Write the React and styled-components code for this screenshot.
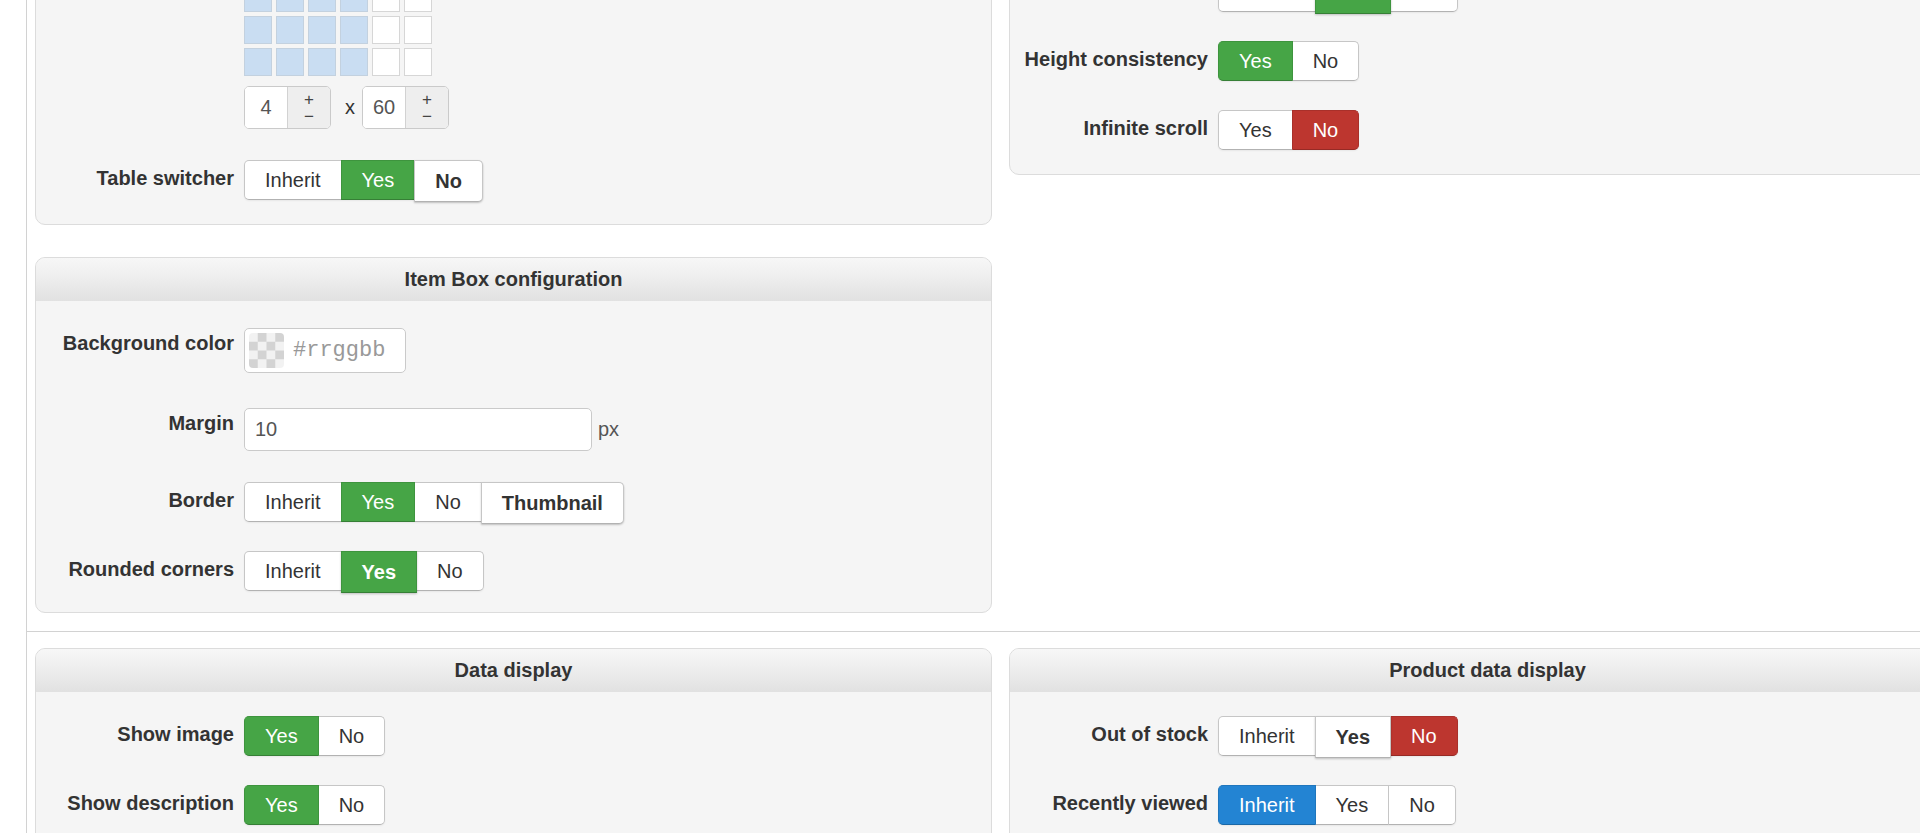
import React from 'react'
import styled, { createGlobalStyle } from 'styled-components'

const GlobalStyle = createGlobalStyle`
  html, body {
    margin: 0;
    padding: 0;
    overflow: hidden;
    background: #fff;
  }
  body {
    font-family: "Liberation Sans", Arial, sans-serif;
    font-size: 20px;
    color: #333;
  }
`

const tones = {
  default: { bg: '#fff', border: '#c6c6c6', bottom: '#b2b2b2', color: '#333' },
  success: { bg: '#46a546', border: '#3e943e', bottom: '#367f36', color: '#fff' },
  danger: { bg: '#bd362f', border: '#a9302a', bottom: '#962a25', color: '#fff' },
  primary: { bg: '#2384d3', border: '#1f76bd', bottom: '#1b68a6', color: '#fff' },
}

// scrolled view: the top of the first row of panels sits above the window
const Page = styled.div`
  margin-top: -165px;
  margin-left: 26px;
  border-left: 1px solid #d2d2d2;
  min-height: 1200px;
`

const Section = styled.div`
  display: grid;
  grid-template-columns: 957px 957px;
  column-gap: 17px;
  align-items: start;
  padding: 0 0 18px 8px;

  & + & {
    border-top: 1px solid #d2d2d2;
    padding-top: 16px;
  }
`

const Column = styled.div`
  display: flex;
  flex-direction: column;
  gap: 32px;
`

const Card = styled.div`
  background: #f5f5f5;
  border: 1px solid #dcdcdc;
  border-radius: 10px;
  overflow: hidden;
`

const CardHeader = styled.div`
  height: 43px;
  line-height: 43px;
  text-align: center;
  font-weight: bold;
  color: #333;
  background: linear-gradient(to bottom, #f7f7f7 0%, #efefef 40%, #e1e1e1 100%);
`

const CardBody = styled.div`
  display: flex;
  flex-direction: column;
  padding: 24px 0 ${p => p.$bottom ?? 24}px;
`

const Row = styled.div`
  display: grid;
  grid-template-columns: 198px auto;
  column-gap: 10px;
  justify-content: start;
  align-items: start;
  margin-bottom: ${p => p.$gap ?? 29}px;

  &:last-child {
    margin-bottom: 0;
  }
`

const Label = styled.label`
  text-align: right;
  font-weight: bold;
  line-height: 24px;
  padding-top: ${p => p.$pad ?? 6}px;
  white-space: nowrap;
`

const Controls = styled.div`
  display: flex;
  flex-direction: ${p => (p.$stack ? 'column' : 'row')};
  align-items: ${p => (p.$stack ? 'flex-start' : 'center')};
`

const BtnGroup = styled.div`
  display: inline-flex;
  align-items: flex-start;
  height: 40px;
  border-radius: 5px;
  box-shadow: 0 1px 2px rgba(0, 0, 0, 0.06);
`

// the pressed-looking option hangs 2px below the group without moving the row
const Btn = styled.span`
  position: relative;
  z-index: ${p => (p.$focus ? 2 : p.$tone && p.$tone !== 'default' ? 1 : 0)};
  box-sizing: border-box;
  height: ${p => (p.$focus ? 42 : 40)}px;
  line-height: ${p => (p.$focus ? 40 : 38)}px;
  padding: 0 20px;
  margin-left: -1px;
  font-size: 20px;
  font-weight: ${p => (p.$focus ? 'bold' : 'normal')};
  white-space: nowrap;
  color: ${p => tones[p.$tone || 'default'].color};
  background: ${p => tones[p.$tone || 'default'].bg};
  border: 1px solid ${p => tones[p.$tone || 'default'].border};
  border-bottom-color: ${p => tones[p.$tone || 'default'].bottom};
  box-shadow: ${p => (p.$focus ? '0 1px 2px rgba(0, 0, 0, 0.22)' : 'none')};

  &:first-child {
    margin-left: 0;
    border-radius: 5px 0 0 5px;
  }
  &:last-child {
    border-radius: 0 5px 5px 0;
  }
`

const Picker = styled.div`
  display: grid;
  grid-template-columns: repeat(6, 28px);
  grid-auto-rows: 28px;
  gap: 4px;
  margin-top: 17px;
`

const Cell = styled.span`
  box-sizing: border-box;
  border: 1px solid ${p => (p.$on ? '#c3d1df' : '#d6d6d6')};
  background: ${p => (p.$on ? '#c9ddf2' : '#fff')};
`

const SpinRow = styled.div`
  display: flex;
  align-items: center;
  margin-top: 10px;
`

const Spinner = styled.div`
  display: inline-flex;
  box-sizing: border-box;
  height: 43px;
  border: 1px solid #cacaca;
  border-radius: 5px;
  overflow: hidden;
  background: #fff;
`

const SpinInput = styled.input`
  box-sizing: border-box;
  width: 42px;
  height: 100%;
  border: 0;
  padding: 0;
  text-align: center;
  font: 20px "Liberation Sans", Arial, sans-serif;
  color: #555;
  background: #fff;
  outline: none;
`

const SpinButtons = styled.div`
  width: 42px;
  display: flex;
  flex-direction: column;
  align-items: center;
  justify-content: center;
  background: #eee;
  border-left: 1px solid #d2d2d2;
  color: #444;
  font-size: 17px;
  line-height: 17px;
`

const Times = styled.span`
  margin: 0 7px 0 14px;
  color: #333;
`

const ColorField = styled.div`
  box-sizing: border-box;
  display: flex;
  align-items: center;
  gap: 9px;
  width: 162px;
  height: 45px;
  margin-top: 3px;
  padding-left: 4px;
  border: 1px solid #cacaca;
  border-radius: 5px;
  background: #fff;
`

const Swatch = styled.span`
  flex: none;
  width: 35px;
  height: 35px;
  border-radius: 4px;
  background: repeating-conic-gradient(#d3d3d3 0 25%, #f2f2f2 0 50%) 0 0 / 17.5px 17.5px;
`

const ColorInput = styled.input`
  width: 100px;
  border: 0;
  padding: 0;
  background: transparent;
  font: 22px "Liberation Mono", "DejaVu Sans Mono", monospace;
  color: #555;
  outline: none;

  &::placeholder {
    color: #999;
  }
`

const TextInput = styled.input`
  box-sizing: border-box;
  width: 348px;
  height: 43px;
  padding: 0 10px;
  border: 1px solid #cacaca;
  border-radius: 5px;
  background: #fff;
  font: 20px "Liberation Sans", Arial, sans-serif;
  color: #555;
  outline: none;
`

const Unit = styled.span`
  margin-left: 6px;
  color: #555;
`

const Toggle = ({ options }) => (
  <BtnGroup>
    {options.map(o => (
      <Btn key={o.label} $tone={o.tone} $focus={o.focus}>
        {o.label}
      </Btn>
    ))}
  </BtnGroup>
)

const Field = ({ label, children, pad, gap, stack }) => (
  <Row $gap={gap}>
    <Label $pad={pad}>{label}</Label>
    <Controls $stack={stack}>{children}</Controls>
  </Row>
)

const Spin = ({ value }) => (
  <Spinner>
    <SpinInput defaultValue={value} />
    <SpinButtons>
      <span>+</span>
      <span>−</span>
    </SpinButtons>
  </Spinner>
)

const cols = 6
const selectedCols = 4
const pickerRows = 5

export default function App () {
  const cells = []
  for (let r = 0; r < pickerRows; r++) {
    for (let c = 0; c < cols; c++) {
      cells.push(<Cell key={`${r}-${c}`} $on={c < selectedCols} />)
    }
  }

  return (
    <>
      <GlobalStyle />
      <Page>
        <Section>
          <Column>
            <Card>
              <CardHeader>Layout configuration</CardHeader>
              <CardBody $bottom={24}>
                <Field label='Table size' stack gap={31}>
                  <Picker>{cells}</Picker>
                  <SpinRow>
                    <Spin value='4' />
                    <Times>x</Times>
                    <Spin value='60' />
                  </SpinRow>
                </Field>
                <Field label='Table switcher'>
                  <Toggle
                    options={[
                      { label: 'Inherit' },
                      { label: 'Yes', tone: 'success' },
                      { label: 'No', focus: true },
                    ]}
                  />
                </Field>
              </CardBody>
            </Card>

            <Card>
              <CardHeader>Item Box configuration</CardHeader>
              <CardBody $bottom={21}>
                <Field label='Background color' gap={35}>
                  <ColorField>
                    <Swatch />
                    <ColorInput placeholder='#rrggbb' />
                  </ColorField>
                </Field>
                <Field label='Margin' pad={3} gap={31}>
                  <TextInput defaultValue='10' />
                  <Unit>px</Unit>
                </Field>
                <Field label='Border'>
                  <Toggle
                    options={[
                      { label: 'Inherit' },
                      { label: 'Yes', tone: 'success' },
                      { label: 'No' },
                      { label: 'Thumbnail', focus: true },
                    ]}
                  />
                </Field>
                <Field label='Rounded corners'>
                  <Toggle
                    options={[
                      { label: 'Inherit' },
                      { label: 'Yes', tone: 'success', focus: true },
                      { label: 'No' },
                    ]}
                  />
                </Field>
              </CardBody>
            </Card>
          </Column>

          <Card>
            <CardHeader>Display options</CardHeader>
            <CardBody>
              <Field label='Item columns'>
                <Toggle options={[{ label: 'Inherit' }, { label: 'Yes' }, { label: 'No', tone: 'danger' }]} />
              </Field>
              <Field label='Show title'>
                <Toggle
                  options={[
                    { label: 'Inherit' },
                    { label: 'Yes', tone: 'success', focus: true },
                    { label: 'No' },
                  ]}
                />
              </Field>
              <Field label='Height consistency'>
                <Toggle options={[{ label: 'Yes', tone: 'success' }, { label: 'No' }]} />
              </Field>
              <Field label='Infinite scroll'>
                <Toggle options={[{ label: 'Yes' }, { label: 'No', tone: 'danger' }]} />
              </Field>
            </CardBody>
          </Card>
        </Section>

        <Section>
          <Card>
            <CardHeader>Data display</CardHeader>
            <CardBody>
              <Field label='Show image'>
                <Toggle options={[{ label: 'Yes', tone: 'success' }, { label: 'No' }]} />
              </Field>
              <Field label='Show description'>
                <Toggle options={[{ label: 'Yes', tone: 'success' }, { label: 'No' }]} />
              </Field>
              <Field label='Show price'>
                <Toggle options={[{ label: 'Yes', tone: 'success' }, { label: 'No' }]} />
              </Field>
            </CardBody>
          </Card>

          <Card>
            <CardHeader>Product data display</CardHeader>
            <CardBody>
              <Field label='Out of stock'>
                <Toggle
                  options={[
                    { label: 'Inherit' },
                    { label: 'Yes', focus: true },
                    { label: 'No', tone: 'danger' },
                  ]}
                />
              </Field>
              <Field label='Recently viewed'>
                <Toggle
                  options={[
                    { label: 'Inherit', tone: 'primary' },
                    { label: 'Yes' },
                    { label: 'No' },
                  ]}
                />
              </Field>
              <Field label='Related products'>
                <Toggle options={[{ label: 'Inherit', tone: 'primary' }, { label: 'Yes' }, { label: 'No' }]} />
              </Field>
            </CardBody>
          </Card>
        </Section>
      </Page>
    </>
  )
}
